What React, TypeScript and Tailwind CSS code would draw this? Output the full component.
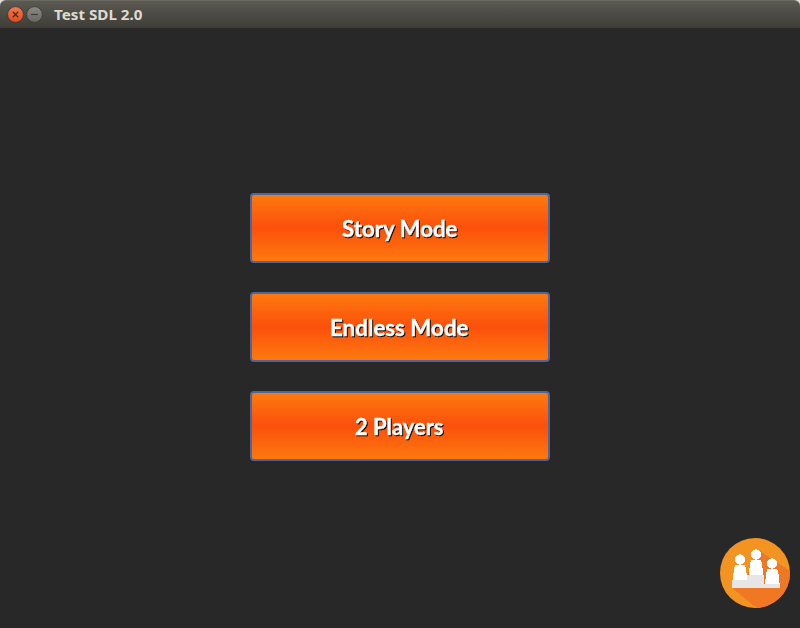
const modes = [
  { label: 'Story Mode', width: 116 },
  { label: 'Endless Mode', width: 139 },
  { label: '2 Players', width: 89 },
];

function ModeButton({ label, width }: { label: string; width: number }) {
  return (
    <button className="flex h-[70px] w-[300px] items-center justify-center rounded-[4px] border-2 border-[#50659b] bg-[linear-gradient(to_bottom,#fd790e_0%,#fc500c_50%,#fd790e_100%)]">
      <svg
        width={width + 6}
        height="40"
        className="-ml-[1px] overflow-visible [filter:drop-shadow(1.5px_1.5px_0_#101010)]"
      >
        <text
          x="3"
          y="28.6"
          textLength={width - 0.5}
          lengthAdjust="spacingAndGlyphs"
          className="fill-white stroke-white stroke-[0.4px] font-['Lato',sans-serif] text-[22px] font-bold"
        >
          {label}
        </text>
      </svg>
    </button>
  );
}

function TitleBar() {
  return (
    <div className="bg-[#dcdcdc]">
      <header className="flex h-7 items-center rounded-t-[6px] border-t border-[#6b6a62] bg-linear-to-b from-[#5b5952] to-[#3e3d38] pl-[7px]">
        <svg width="37" height="18" viewBox="0 0 37 18" className="mt-px">
          <defs>
            <linearGradient id="close" x2="0" y2="1">
              <stop stopColor="#f47a50" />
              <stop offset="1" stopColor="#df4b1c" />
            </linearGradient>
            <linearGradient id="minimize" x2="0" y2="1">
              <stop stopColor="#8b8981" />
              <stop offset="1" stopColor="#686761" />
            </linearGradient>
          </defs>
          <circle cx="8.5" cy="8.5" r="7.9" fill="url(#close)" stroke="#37352f" strokeWidth=".8" />
          <path d="m5.8 5.8 5.4 5.4m0-5.4-5.4 5.4" stroke="#54291b" strokeWidth="1.3" />
          <circle cx="27.5" cy="8.5" r="7.9" fill="url(#minimize)" stroke="#37352f" strokeWidth=".8" />
          <path d="M24 8.5h7" stroke="#3b3a35" strokeWidth="1.1" />
        </svg>
        <svg width="94" height="20" className="ml-[10px] overflow-visible">
          <text
            x="0"
            y="15"
            textLength="88.5"
            lengthAdjust="spacingAndGlyphs"
            className="fill-[#dfdbd2] font-['Noto_Sans',sans-serif] text-[14px] font-bold"
          >
            Test SDL 2.0
          </text>
        </svg>
      </header>
    </div>
  );
}

function LeaderboardIcon() {
  return (
    <svg width="70" height="70" viewBox="0 0 70 70" shapeRendering="crispEdges">
      <clipPath id="disc">
        <circle cx="35" cy="35" r="35" />
      </clipPath>
      <g clipPath="url(#disc)">
        <path fill="#f39322" d="M0 0h70v70H0z" />
        <path fill="#f07824" d="M39 12.5 70 33v37H36.5L12 50l15-13Z" />
      </g>
      <path fill="#e6e6e6" d="M12 42h15v-5h17v9h16v4H12Z" />
      <g fill="#fff">
        <circle cx="20" cy="21.5" r="5.2" />
        <circle cx="35.8" cy="16.5" r="5.2" />
        <circle cx="52" cy="25.5" r="5.2" />
        <path d="M15.5 26.5h9q1.3 1.5 1.8 6.5l1 9H12.7l1-9q.5-5 1.8-6.5Z" />
        <path d="M31.5 21.5h9q1.3 1.5 1.8 6.5l1 9H28.7l1-9q.5-5 1.8-6.5Z" />
        <path d="M47.8 30.5h9q1.3 1.5 1.8 6.5l1 9H45l1-9q.5-5 1.8-6.5Z" />
      </g>
    </svg>
  );
}

export default function App() {
  return (
    <div className="flex h-[628px] w-[800px] flex-col overflow-hidden bg-[#282828]">
      <TitleBar />
      <main className="flex flex-1 flex-col items-center pt-[165px]">
        <div className="flex flex-col gap-[29px]">
          {modes.map((mode) => (
            <ModeButton key={mode.label} {...mode} />
          ))}
        </div>
        <div className="mt-auto mr-[10px] mb-5 self-end">
          <LeaderboardIcon />
        </div>
      </main>
    </div>
  );
}
